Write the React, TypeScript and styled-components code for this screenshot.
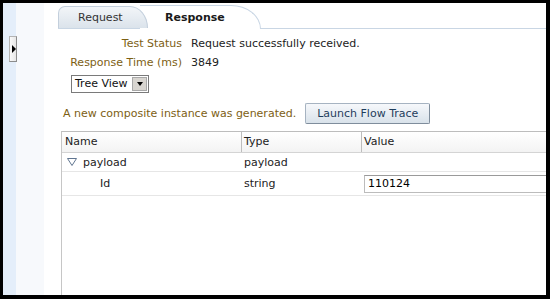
import styled, { createGlobalStyle } from "styled-components";

const GlobalStyle = createGlobalStyle`
    body {
        margin: 0;
        background: #fff;
    }
`;

const Frame = styled.div`
    width: 550px;
    height: 299px;
    box-sizing: border-box;
    border: solid #000;
    border-width: 3px 4px 4px 3px;
    display: flex;
    overflow: hidden;
    background: #fff;
    font-family: "DejaVu Sans", "Liberation Sans", sans-serif;
    font-size: 11px;
    color: #222;
`;

const Rail = styled.div`
    width: 13px;
    flex-shrink: 0;
    padding-top: 33px;
    background: #e4eefa;
    position: relative;
    z-index: 1;
`;

const Toggle = styled.div`
    width: 8px;
    height: 26px;
    margin-left: 6px;
    box-sizing: border-box;
    background: linear-gradient(90deg, #fafafa, #e6e6e6);
    border: 1px solid #b4b4b4;
    border-right-color: #8c8c8c;
    border-bottom-color: #8c8c8c;
    display: flex;
    align-items: center;
    justify-content: center;

    &::after {
        content: "";
        border-left: 4px solid #000;
        border-top: 4px solid transparent;
        border-bottom: 4px solid transparent;
        margin-left: 1px;
    }
`;

const Gutter = styled.div`
    width: 28px;
    flex-shrink: 0;
    background: #f7f9fc;
`;

const Main = styled.div`
    flex: 1;
    min-width: 0;
    display: flex;
    flex-direction: column;
    padding-left: 14px;
    overflow: hidden;
`;

const TabBar = styled.div`
    height: 25px;
    display: flex;
    align-items: flex-end;
    border-bottom: 1px solid #c9d6e4;
`;

const RequestTab = styled.div`
    position: relative;
    z-index: 2;
    width: 90px;
    height: 22px;
    box-sizing: border-box;
    padding-left: 19px;
    display: flex;
    align-items: center;
    border: 1px solid #c3cfdc;
    border-bottom: none;
    border-radius: 7px 18px 0 0 / 7px 22px 0 0;
    background: linear-gradient(#f2f5f8, #dbe3eb);
    color: #333;
`;

const ResponseTab = styled.div`
    position: relative;
    z-index: 1;
    width: 121px;
    height: 24px;
    margin-left: -8px;
    margin-bottom: -1px;
    box-sizing: border-box;
    padding-left: 25px;
    display: flex;
    align-items: center;
    border-top: 1px solid #c9d6e4;
    border-right: 1px solid #c9d6e4;
    border-radius: 0 30px 0 0 / 0 24px 0 0;
    background: #fff;
    font-weight: bold;
    color: #1a1a1a;
`;

const StatusGrid = styled.div`
    padding-top: 5px;
    display: grid;
    grid-template-columns: 124px auto;
    grid-auto-rows: 18px;
    column-gap: 9px;
    row-gap: 1px;
    align-items: center;
`;

const Label = styled.div`
    text-align: right;
    color: #7d6014;
`;

const Value = styled.div`
    color: #222;
`;

const ViewSelect = styled.div`
    margin-top: 4px;
    margin-left: 13px;
    width: 78px;
    height: 18px;
    box-sizing: border-box;
    border: 1px solid #7a7a7a;
    display: flex;
    align-items: stretch;
    background: #fff;
`;

const SelectText = styled.div`
    flex: 1;
    padding-left: 3px;
    line-height: 16px;
    color: #111;
`;

const SelectArrow = styled.div`
    width: 15px;
    margin: 1px;
    box-sizing: border-box;
    background: #d8d5d0;
    border: 1px solid #a8a8a8;
    display: flex;
    align-items: center;
    justify-content: center;

    &::after {
        content: "";
        border-top: 4px solid #000;
        border-left: 3px solid transparent;
        border-right: 3px solid transparent;
    }
`;

const MessageRow = styled.div`
    margin-top: 10px;
    padding-left: 5px;
    display: flex;
    align-items: center;
    gap: 9px;
`;

const Message = styled.span`
    color: #7d6014;
`;

const FlowButton = styled.button`
    height: 21px;
    padding: 0 11px;
    font-family: inherit;
    font-size: 11px;
    color: #1f3d5c;
    background: linear-gradient(#f6f8fb, #d9e2ea);
    border: 1px solid #a6b3c1;
    border-right-color: #7f8d9c;
    border-bottom-color: #7f8d9c;
    border-radius: 2px;
`;

const Table = styled.div`
    margin-top: 7px;
    margin-left: 3px;
    flex: 1;
    width: 620px;
    border-left: 1px solid #c6c6c6;
    border-top: 1px solid #bdbdbd;
    display: flex;
    flex-direction: column;
`;

const HeaderRow = styled.div`
    height: 20px;
    display: grid;
    grid-template-columns: 179px 120px 1fr;
    border-bottom: 1px solid #d4d4d4;
    background: linear-gradient(#ffffff, #f3f3f3);
`;

const HeaderCell = styled.div<{ $divider?: boolean }>`
    box-sizing: border-box;
    padding-left: ${(p) => (p.$divider ? "2px" : "3px")};
    border-left: ${(p) => (p.$divider ? "1px solid #bdbdbd" : "none")};
    line-height: 20px;
    color: #222;
`;

const DataRow = styled.div<{ $height: number }>`
    height: ${(p) => p.$height}px;
    display: grid;
    grid-template-columns: 179px 120px 1fr;
    align-items: center;
    border-bottom: 1px solid #e6e6e6;
`;

const NameCell = styled.div<{ $indent: number }>`
    padding-left: ${(p) => p.$indent}px;
    display: flex;
    align-items: center;
    gap: 6px;
    color: #222;
`;

const TypeCell = styled.div`
    padding-left: 3px;
    color: #222;
`;

const ValueCell = styled.div`
    padding-left: 3px;
`;

const ValueInput = styled.input`
    width: 300px;
    height: 18px;
    box-sizing: border-box;
    padding: 0 3px;
    border: 1px solid #bcbcbc;
    border-top-color: #9a9a9a;
    font-family: inherit;
    font-size: 11px;
    color: #000;
    outline: none;
`;

const Disclosure = () => (
    <svg width="10" height="8" viewBox="0 0 10 8">
        <polygon points="0.5,0.5 9.5,0.5 5,7.5" fill="none" stroke="#607590" strokeWidth="1" />
    </svg>
);

const App = () => {
    return (
        <>
            <GlobalStyle />
            <Frame>
                <Rail>
                    <Toggle />
                </Rail>
                <Gutter />
                <Main>
                    <TabBar>
                        <RequestTab>Request</RequestTab>
                        <ResponseTab>Response</ResponseTab>
                    </TabBar>
                    <StatusGrid>
                        <Label>Test Status</Label>
                        <Value>Request successfully received.</Value>
                        <Label>Response Time (ms)</Label>
                        <Value>3849</Value>
                    </StatusGrid>
                    <ViewSelect>
                        <SelectText>Tree View</SelectText>
                        <SelectArrow />
                    </ViewSelect>
                    <MessageRow>
                        <Message>A new composite instance was generated.</Message>
                        <FlowButton>Launch Flow Trace</FlowButton>
                    </MessageRow>
                    <Table>
                        <HeaderRow>
                            <HeaderCell>Name</HeaderCell>
                            <HeaderCell $divider>Type</HeaderCell>
                            <HeaderCell $divider>Value</HeaderCell>
                        </HeaderRow>
                        <DataRow $height={18}>
                            <NameCell $indent={5}>
                                <Disclosure />
                                payload
                            </NameCell>
                            <TypeCell>payload</TypeCell>
                            <ValueCell />
                        </DataRow>
                        <DataRow $height={23}>
                            <NameCell $indent={38}>Id</NameCell>
                            <TypeCell>string</TypeCell>
                            <ValueCell>
                                <ValueInput readOnly defaultValue="110124" />
                            </ValueCell>
                        </DataRow>
                    </Table>
                </Main>
            </Frame>
        </>
    );
};

export default App;
